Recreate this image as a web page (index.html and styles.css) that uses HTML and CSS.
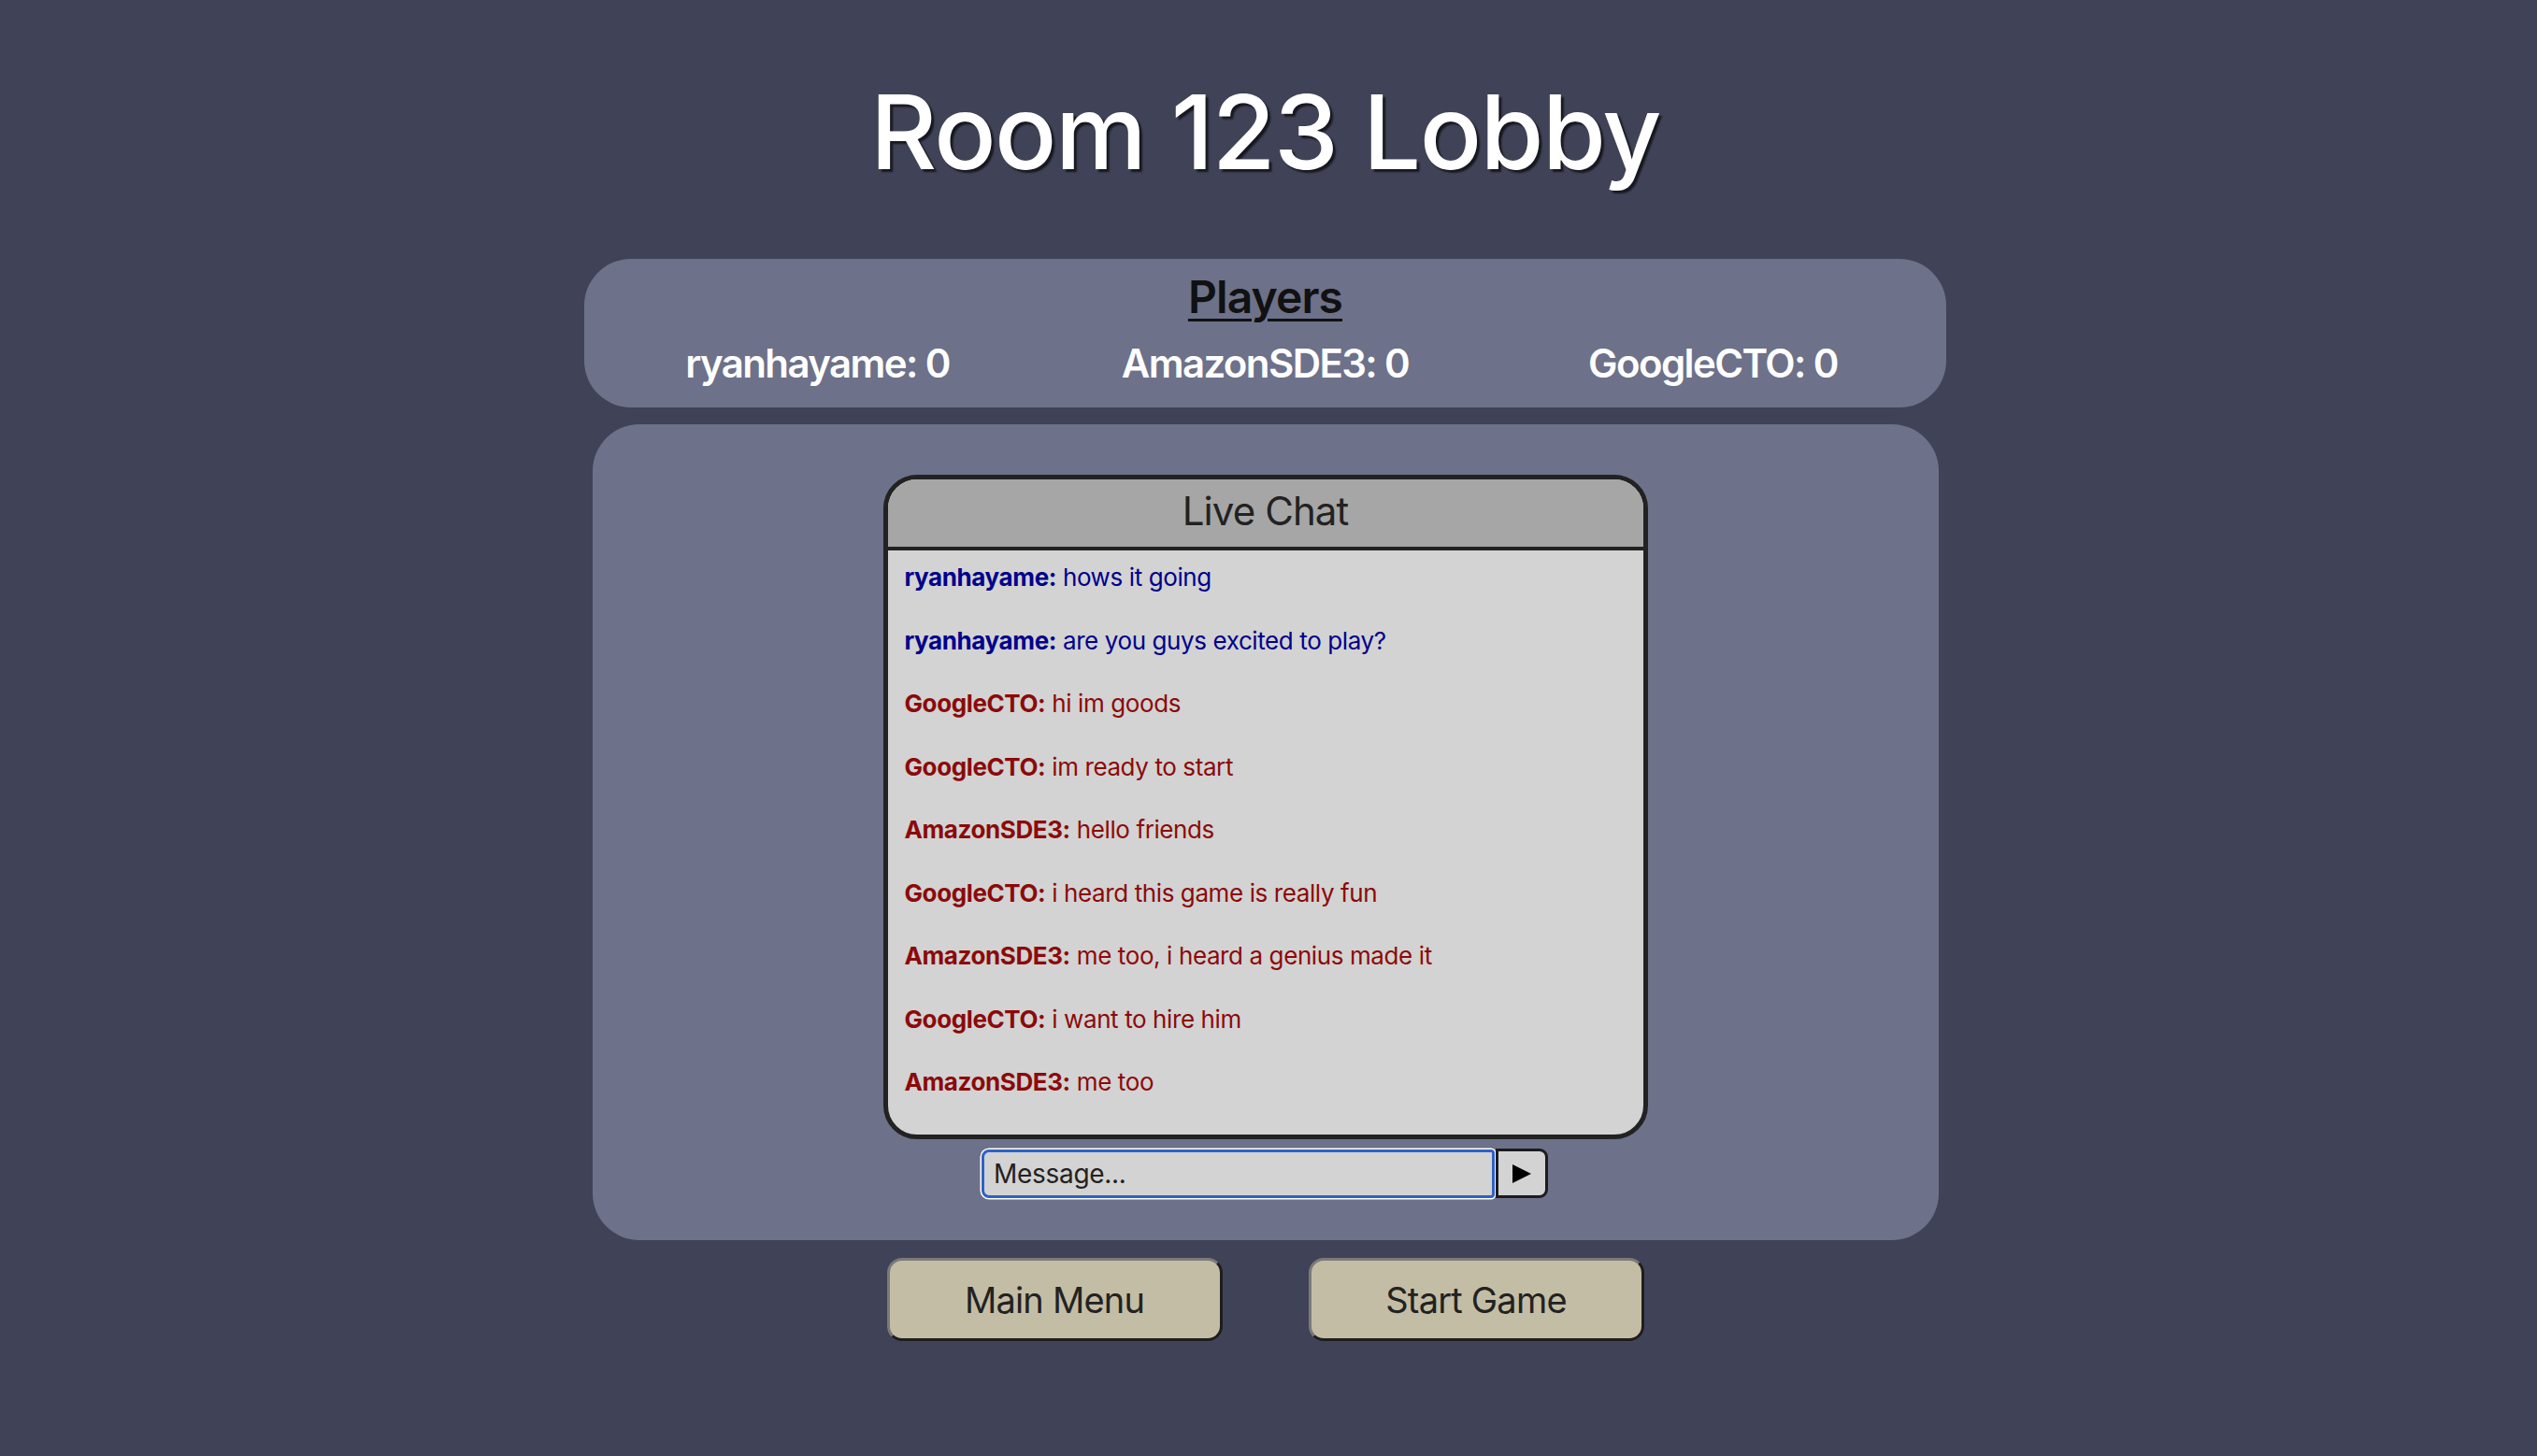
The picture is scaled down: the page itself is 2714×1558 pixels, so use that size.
FILE: index.html
```html
<!DOCTYPE html>
<html lang="en">
<head>
<meta charset="utf-8">
<title>Room 123 Lobby</title>
<link rel="stylesheet" href="styles.css">
</head>
<body>
<h1 class="title">Room 123 Lobby</h1>

<section class="players">
  <h2 class="players-heading">Players</h2>
  <div class="players-list">
    <div class="player">ryanhayame: 0</div>
    <div class="player">AmazonSDE3: 0</div>
    <div class="player">GoogleCTO: 0</div>
  </div>
</section>

<section class="lobby">
  <div class="chat">
    <div class="chat-header">Live Chat</div>
    <div class="chat-body">
      <p class="msg self"><b>ryanhayame:</b> hows it going</p>
      <p class="msg self"><b>ryanhayame:</b> are you guys excited to play?</p>
      <p class="msg other"><b>GoogleCTO:</b> hi im goods</p>
      <p class="msg other"><b>GoogleCTO:</b> im ready to start</p>
      <p class="msg other"><b>AmazonSDE3:</b> hello friends</p>
      <p class="msg other"><b>GoogleCTO:</b> i heard this game is really fun</p>
      <p class="msg other"><b>AmazonSDE3:</b> me too, i heard a genius made it</p>
      <p class="msg other"><b>GoogleCTO:</b> i want to hire him</p>
      <p class="msg other"><b>AmazonSDE3:</b> me too</p>
    </div>
  </div>
  <form class="chat-form" onsubmit="return false;">
    <input class="chat-input" type="text" placeholder="Message...">
    <button class="chat-send" type="submit" aria-label="Send">
      <svg width="22" height="22" viewBox="0 0 22 22"><polygon points="1,1 21,11 1,21" fill="#000"/></svg>
    </button>
  </form>
</section>

<div class="actions">
  <button class="action-btn" type="button">Main Menu</button>
  <button class="action-btn" type="button">Start Game</button>
</div>
</body>
</html>
```

FILE: styles.css
```css
* { box-sizing: border-box; }

body {
  margin: 0;
  padding-right: 7px;
  background: #404357;
  font-family: Inter, "Noto Sans", "Liberation Sans", sans-serif;
  color: #222;
}

.title {
  margin: 75px 0 0;
  text-align: center;
  font-size: 110px;
  font-weight: 500;
  line-height: 133px;
  color: #fff;
  letter-spacing: -1.6px;
  text-shadow: 3px 3px 2px rgba(0, 0, 0, 0.65);
}

.players {
  width: 1457px;
  height: 159px;
  margin: 69px auto 0;
  padding: 12px 10px 0;
  background: #6d7189;
  border-radius: 50px;
}

.players-heading {
  margin: 0;
  text-align: center;
  font-size: 48px;
  font-weight: 600;
  line-height: 58px;
  color: #111;
  text-decoration: underline;
  text-decoration-thickness: 3px;
  text-underline-offset: 6px;
  letter-spacing: -0.9px;
}

.players-list {
  display: grid;
  grid-template-columns: repeat(3, 1fr);
  margin-top: 16px;
}

.player {
  text-align: center;
  font-size: 42px;
  font-weight: 600;
  line-height: 51px;
  color: #fff;
  letter-spacing: -1.6px;
}

.lobby {
  width: 1440px;
  height: 873px;
  margin: 18px auto 0;
  padding-top: 54px;
  background: #6d7189;
  border-radius: 50px;
  display: flex;
  flex-direction: column;
  align-items: center;
}

.chat {
  width: 818px;
  height: 711px;
  border: 5px solid #222;
  border-radius: 36px;
  background: #d3d3d3;
  overflow: hidden;
  display: flex;
  flex-direction: column;
}

.chat-header {
  height: 76px;
  padding-top: 8px;
  background: #a6a6a6;
  border-bottom: 4px solid #222;
  text-align: center;
  font-size: 42px;
  line-height: 51px;
  font-weight: 400;
  color: #222;
  letter-spacing: -0.9px;
}

.chat-body {
  flex: 1;
  padding: 13px 18px 0;
  overflow-y: auto;
}

.msg {
  margin: 0 0 35.5px;
  font-size: 26px;
  line-height: 32px;
  letter-spacing: -0.4px;
}

.msg b { font-weight: 700; }

.msg.self { color: #00008b; }
.msg.other { color: #8b0a0a; }

.chat-form {
  display: flex;
  margin: 10px 0 0 -1px;
}

.chat-input {
  width: 549px;
  height: 52px;
  margin: 1px 1px 1px 0;
  padding: 0 10px;
  border: 3px solid #2d62c6;
  border-radius: 8px 4px 4px 8px;
  box-shadow: 0 0 0 1.5px #fff;
  background: #d3d3d3;
  font-family: inherit;
  font-size: 28px;
  letter-spacing: -0.3px;
  color: #222;
  outline: none;
}

.chat-input::placeholder { color: #222; opacity: 1; }

.chat-send {
  width: 56px;
  height: 53px;
  padding: 0;
  border: 3px solid #1c1c1c;
  border-radius: 0 9px 9px 0;
  background: #d3d3d3;
  display: flex;
  align-items: center;
  justify-content: center;
  cursor: pointer;
}

.chat-send svg { display: block; }

.actions {
  display: flex;
  justify-content: center;
  gap: 92px;
  margin-top: 19px;
}

.action-btn {
  width: 359px;
  height: 89px;
  padding: 0;
  background: #c4bda5;
  border: 3px solid;
  border-color: #7a7a7a #1e1e1e #1e1e1e #7a7a7a;
  border-radius: 16px;
  font-family: inherit;
  font-size: 38px;
  font-weight: 400;
  color: #222;
  letter-spacing: -0.8px;
  cursor: pointer;
}
```
